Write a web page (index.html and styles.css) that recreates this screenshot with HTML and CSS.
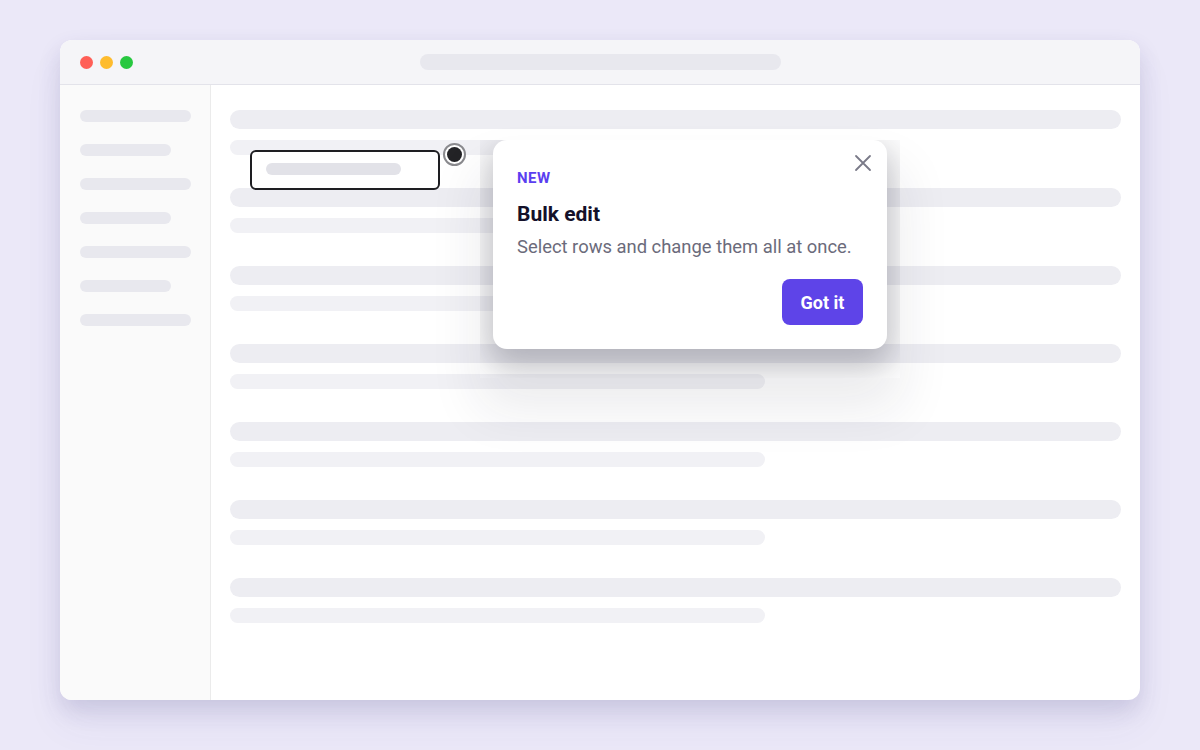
FILE: index.html
```html
<!DOCTYPE html>
<html lang="en">
<head>
<meta charset="utf-8">
<title>Bulk edit</title>
<link rel="stylesheet" href="styles.css">
</head>
<body>
<div class="window">
  <div class="titlebar">
    <div class="lights">
      <span class="light red"></span>
      <span class="light yellow"></span>
      <span class="light green"></span>
    </div>
    <div class="address"></div>
  </div>
  <div class="body">
    <aside class="sidebar">
      <div class="sbar long"></div>
      <div class="sbar short"></div>
      <div class="sbar long"></div>
      <div class="sbar short"></div>
      <div class="sbar long"></div>
      <div class="sbar short"></div>
      <div class="sbar long"></div>
    </aside>
    <main class="main">
      <div class="row"><div class="big"></div><div class="small"></div></div>
      <div class="row"><div class="big"></div><div class="small"></div></div>
      <div class="row"><div class="big"></div><div class="small"></div></div>
      <div class="row"><div class="big"></div><div class="small"></div></div>
      <div class="row"><div class="big"></div><div class="small"></div></div>
      <div class="row"><div class="big"></div><div class="small"></div></div>
      <div class="row"><div class="big"></div><div class="small"></div></div>
    </main>
  </div>

  <div class="target"><div class="target-bar"></div></div>
  <div class="beacon"><span class="beacon-dot"></span></div>

  <div class="pop-clip">
    <div class="popover">
      <button class="close" aria-label="Close">
        <svg width="18" height="18" viewBox="0 0 18 18"><path d="M2 2 L16 16 M16 2 L2 16" stroke="#7a7a88" stroke-width="1.8" stroke-linecap="round" fill="none"/></svg>
      </button>
      <div class="tag">NEW</div>
      <div class="title">Bulk edit</div>
      <div class="desc">Select rows and change them all at once.</div>
      <div class="actions"><button class="got">Got it</button></div>
    </div>
  </div>
</div>
</body>
</html>
```
FILE: styles.css
```css
* { box-sizing: border-box; }
html, body { margin: 0; padding: 0; }
body {
  width: 1200px;
  height: 750px;
  background: #ebe8f8;
  font-family: Roboto, "Liberation Sans", sans-serif;
  padding: 40px 60px 0 60px;
  overflow: hidden;
}
.window {
  position: relative;
  width: 1080px;
  height: 660px;
  background: #ffffff;
  border-radius: 12px;
  box-shadow: 0 10px 22px rgba(70, 60, 130, 0.16), 0 24px 40px rgba(70, 60, 130, 0.06);
  display: flex;
  flex-direction: column;
}
.titlebar {
  height: 45px;
  background: #f5f5f8;
  border-bottom: 1px solid #e3e3ea;
  border-radius: 12px 12px 0 0;
  display: flex;
  align-items: center;
  padding-left: 20px;
  position: relative;
}
.lights { display: flex; gap: 7px; }
.light { width: 13px; height: 13px; border-radius: 50%; display: block; }
.red { background: #ff5f57; }
.yellow { background: #febc2e; }
.green { background: #28c840; }
.address {
  position: absolute;
  left: 360px;
  top: 14px;
  width: 361px;
  height: 16px;
  background: #e8e8ee;
  border-radius: 8px;
}
.body {
  flex: 1;
  display: flex;
  border-radius: 0 0 12px 12px;
  overflow: hidden;
}
.sidebar {
  width: 151px;
  background: #fafafa;
  border-right: 1px solid #ebebeb;
  padding: 25px 0 0 20px;
  display: flex;
  flex-direction: column;
  gap: 22px;
}
.sbar { height: 12px; border-radius: 6px; background: #e8e8ee; }
.sbar.long { width: 111px; }
.sbar.short { width: 91px; }
.main {
  flex: 1;
  padding: 25px 19px 0 19px;
  display: flex;
  flex-direction: column;
  gap: 33px;
}
.row { display: flex; flex-direction: column; gap: 11px; }
.big { height: 19px; border-radius: 10px; background: #ededf2; }
.small { height: 15px; width: 535px; border-radius: 8px; background: #f1f1f5; }

.target {
  position: absolute;
  left: 190px;
  top: 110px;
  width: 190px;
  height: 40px;
  border: 2.5px solid #1e1e22;
  border-radius: 6px;
  background: #ffffff;
  padding: 11px 0 0 14px;
}
.target-bar { width: 135px; height: 12px; border-radius: 6px; background: #e2e2e8; }
.beacon {
  position: absolute;
  left: 383px;
  top: 103px;
  width: 23px;
  height: 23px;
  border-radius: 50%;
  border: 2px solid #8a8a8e;
  background: #ffffff;
  display: flex;
  align-items: center;
  justify-content: center;
}
.beacon-dot { width: 15px; height: 15px; border-radius: 50%; background: #232326; display: block; }

.pop-clip {
  position: absolute;
  left: 420px;
  top: 100px;
  width: 420px;
  height: 238px;
  overflow: hidden;
  box-shadow: 0 30px 50px rgba(30, 30, 50, 0.09);
}
.popover {
  position: relative;
  margin-left: 13px;
  width: 394px;
  height: 209px;
  background: #ffffff;
  border-radius: 14px;
  box-shadow: 0 14px 34px 6px rgba(20, 20, 40, 0.28);
  padding: 28px 24px 24px 24px;
}
.close {
  position: absolute;
  right: 15px;
  top: 14px;
  width: 18px;
  height: 18px;
  padding: 0;
  border: 0;
  background: none;
  display: block;
}
.close svg { display: block; }
.tag {
  font-size: 15px;
  line-height: 20px;
  font-weight: 700;
  color: #5b3ff0;
  letter-spacing: 0.5px;
}
.title {
  margin-top: 13px;
  font-size: 21px;
  line-height: 26px;
  font-weight: 700;
  color: #14112a;
}
.desc {
  margin-top: 8px;
  font-size: 18.4px;
  line-height: 24px;
  color: #6b6b7b;
}
.actions { margin-top: 20px; display: flex; justify-content: flex-end; }
.got {
  width: 81px;
  height: 46px;
  border: 0;
  border-radius: 8px;
  background: #5e44e8;
  color: #ffffff;
  font-family: Roboto, "Liberation Sans", sans-serif;
  font-size: 18px;
  font-weight: 700;
  padding: 0;
}
```
